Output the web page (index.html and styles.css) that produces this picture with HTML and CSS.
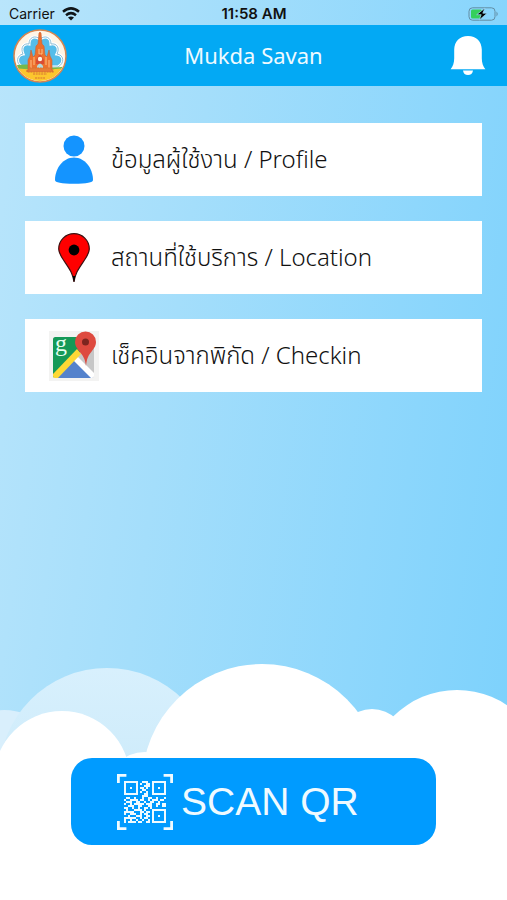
FILE: index.html
```html
<!DOCTYPE html>
<html lang="th">
<head>
<meta charset="utf-8">
<meta name="viewport" content="width=device-width, initial-scale=1">
<title>Mukda Savan</title>
<link rel="stylesheet" href="styles.css">
</head>
<body>
<div class="app">
  <div class="status">
    <div class="carrier">
      <span>Carrier</span>
      <svg width="18" height="14" viewBox="0 0 18 14" fill="none" stroke="#101518" stroke-width="2.5" aria-hidden="true">
        <path d="M1 4.8Q9-2 17 4.8M4 8.2q5-4.1 10 0"/>
        <path d="M9 13.5 6 10.6q3-2.2 6 0z" fill="#101518" stroke="none"/>
      </svg>
    </div>
    <time class="clock">11:58 AM</time>
    <svg class="battery" width="31" height="14" viewBox="0 0 31 14" aria-hidden="true">
      <rect x="1" y=".8" width="26" height="12.4" rx="3.5" fill="none" stroke="#628da3"/>
      <rect x="3" y="2.6" width="11" height="8.8" rx="1.5" fill="#35cf5b"/>
      <path d="M28.5 4.5q2.4 2.5 0 5z" fill="#628da3"/>
      <path d="M17 1 8.7 7.7h4.5L11.2 13l8-6.8h-4.4z" fill="#000" stroke="#a5dffb" stroke-width=".7"/>
    </svg>
  </div>

  <header class="bar">
    <svg class="emblem" width="54" height="54" viewBox="0 0 54 54" role="img" aria-label="Mukda Savan emblem">
      <defs><clipPath id="seal"><circle cx="27" cy="27" r="25"/></clipPath></defs>
      <circle cx="27" cy="27" r="26" fill="#fff5e5" stroke="#d78650" stroke-width="1.5"/>
      <g clip-path="url(#seal)">
        <path d="M9 38c-7-4-5-12 1-13-3-7 1-11 6-10 0-7 6-9 11-5 5-4 11-2 11 5 6-1 9 4 6 10 7 1 8 9 1 13z" fill="#56bde9" stroke="#fff" stroke-width="3"/>
        <path d="M9 38c-7-4-5-12 1-13-3-7 1-11 6-10 0-7 6-9 11-5 5-4 11-2 11 5 6-1 9 4 6 10 7 1 8 9 1 13z" fill="none" stroke="#74afc9" stroke-width=".8"/>
        <path d="M0 37q13-3 27 0t27 0v4H0z" fill="#75b94b"/>
        <path d="M0 39q27 3 54 0v15H0z" fill="#fcc62e"/>
        <path d="M15 42V31l2-4 1-6 2 7 2-2 1-9 2-2 1-11 1-1 1 1 1 11 2 2 1 9 2 2 2-7 1 6 2 4v11z" fill="#ed702c" stroke="#c96236" stroke-width=".6"/>
        <path d="M18 31v9M21 28v8M33 28v8M36 31v9M26 20v5h3v-5" fill="none" stroke="#ffc083" stroke-width="1"/>
        <path d="M23 35v-4l4-6 4 6v4z" fill="#d94c34"/>
        <circle cx="27" cy="30" r="2.2" fill="#fff4df"/>
        <path d="M24 42v-5q3-5 6 0v5z" fill="#b4d9da"/>
        <path d="M16 39h22v2h2v2H14v-2h2zM20 45h14M22 49h10" fill="#e77d35" stroke="#d67332" stroke-width="1.2" stroke-dasharray="2 .7"/>
      </g>
    </svg>
    <h1 class="title">Mukda Savan</h1>
    <button class="bell" type="button" aria-label="Notifications">
      <svg width="36" height="42" viewBox="0 0 36 42" fill="#fff" aria-hidden="true">
        <path d="M18 1C9.5 1 4.4 6.7 4.2 14.5v8.8c0 4.8-1.3 8-3.6 11h34.8c-2.3-3-3.6-6.2-3.6-11v-8.8C31.6 6.7 26.5 1 18 1z"/>
        <path d="M13 35.5h10c-.4 3-2.2 4.500-5 4.500s-4.600-1.500-5-4.500z"/>
      </svg>
    </button>
  </header>

  <main class="menu">
    <a class="item" href="#profile">
      <svg class="icon" width="50" height="50" viewBox="0 0 50 50" fill="#1494ff" aria-hidden="true">
        <circle cx="25" cy="11" r="10.5"/>
        <path d="M6 45C6 33.500 14 22.500 25 22.500S44 33.500 44 45q0 3.800-19 3.800T6 45z"/>
      </svg>
      <span>ข้อมูลผู้ใช้งาน / Profile</span>
    </a>
    <a class="item" href="#location">
      <svg class="icon" width="50" height="50" viewBox="0 0 50 50" aria-hidden="true">
        <path d="M25 49C24 40 19.500 34.500 14.500 27 11.500 22.500 9.700 19.700 9.700 16a15.300 15.300 0 0 1 30.600 0c0 3.700-1.800 6.500-4.800 11C30.500 34.500 26 40 25 49z" fill="#f00" stroke="#3c1010" stroke-width="1.200"/>
        <path d="m23.500 43 1.500 6 1.500-6z"/>
        <circle cx="25" cy="17" r="5.400"/>
      </svg>
      <span>สถานที่ใช้บริการ / Location</span>
    </a>
    <a class="item" href="#checkin">
      <svg class="icon" width="50" height="50" viewBox="0 0 50 50" aria-hidden="true">
        <defs><clipPath id="map"><rect x="4" y="6" width="41" height="41" rx="2.500"/></clipPath></defs>
        <path d="M0 0h50v50H0z" fill="#f3f3f2"/>
        <g clip-path="url(#map)">
          <path d="M4 6h41v41H4z" fill="#c7c7c7"/>
          <path d="M4 6h29v13L4 47z" fill="#159957"/>
          <path d="M7 48 25 28l20 20z" fill="#5482cc"/>
          <path d="m24 29 4-4 17 17v5h-3z" fill="#fff"/>
          <path d="m3 44 25-26 4 5L8 48H3z" fill="#fdd835"/>
        </g>
        <text x="6" y="20" class="mapletter">g</text>
        <path d="M37 35c-1-8-3-10-7-15-3-4-4-6-4-9a10.500 10.500 0 0 1 21 0c0 3-1 5-4 9-4 5-5 7-6 15z" fill="#de4a3f"/>
        <circle cx="36.500" cy="11" r="3.500" fill="#7d251f"/>
      </svg>
      <span>เช็คอินจากพิกัด / Checkin</span>
    </a>
  </main>

  <footer class="sky">
    <svg class="clouds" viewBox="0 0 507 240" preserveAspectRatio="xMidYMin slice" aria-hidden="true">
      <defs>
        <linearGradient id="haze" x1="0" y1="0" x2="0" y2="1">
          <stop offset="0" stop-color="#d8f0fd"/><stop offset=".5" stop-color="#cdebfa"/>
        </linearGradient>
      </defs>
      <circle cx="4" cy="110" r="60" fill="#d9effc"/>
      <circle cx="107" cy="116" r="108" fill="url(#haze)"/>
      <g fill="#fff">
        <circle cx="62" cy="119" r="68"/>
        <circle cx="145" cy="132" r="40"/>
        <circle cx="262" cy="124" r="120"/>
        <circle cx="372" cy="84" r="35"/>
        <circle cx="457" cy="120" r="90"/>
        <path d="M0 99h507v141H0z"/>
      </g>
    </svg>
    <button class="scan" type="button">
      <svg width="56" height="56" viewBox="0 0 28 28" fill="none" stroke="#effaff" aria-hidden="true">
        <path d="M.7 4.500V.7H4.700M23.300.7h4V4.500M.7 23.500v3.800H4.700M23.300 27.300h4V23.500" stroke-width="1.400"/>
        <path d="M4 4h6v6H4zM18 4h6v6h-6zM18 18h6v6h-6zM6.500 7h1M20.500 7h1M20.500 21h1M12.500 4h3M11.500 5h1m2 0h2M13.500 6h3M11.500 7h2m1 0h1M12.500 8h2M11.500 9h1m2 0h1M13.500 10h2M12.500 11h3M4.500 12h2m2 0h1m3 0h1m2 0h2m2 0h1m3 0h1M3.500 13h1m2 0h4m1 0h2m2 0h1m1 0h3m1 0h2M4.500 14h3m2 0h2m2 0h1m2 0h2m2 0h1M3.500 15h1m2 0h1m1 0h5m1 0h3m2 0h2m1 0h2M5.500 16h3m2 0h2m3 0h2m2 0h1m2 0h2M3.500 17h2m2 0h1m2 0h1m2 0h2m1 0h1M4.500 18h1m3 0h4m1 0h1M3.500 19h5m3 0h2m1 0h2M3.500 20h1m2 0h3m2 0h1m1 0h2M5.500 21h1m3 0h3m2 0h2M3.500 22h6m2 0h1m1 0h2M3.500 23h1m2 0h1m2 0h1m2 0h1m2 0h1M3.500 24h1m1 0h4m1 0h2m2 0h2"/>
      </svg>
      <span>SCAN QR</span>
    </button>
  </footer>
</div>
</body>
</html>
```
FILE: styles.css
```css
* {
  box-sizing: border-box;
}

body {
  margin: 0;
  font-family: "Noto Sans", "Noto Sans Thai", sans-serif;
  color: #111;
}

.app {
  display: flex;
  flex-direction: column;
  min-height: 100vh;
  background: linear-gradient(98deg, #b9e5fb 0%, #a4defb 35%, #8ed7fc 70%, #7bd1fc 100%);
}

.status {
  display: grid;
  grid-template-columns: 1fr auto 1fr;
  align-items: center;
  height: 25px;
  padding: 2px 8px 0 9px;
  font: 14px/16px Inter, sans-serif;
}

.carrier {
  display: flex;
  align-items: center;
  gap: 7px;
}

.clock {
  font-size: 15px;
  font-weight: 600;
}

.battery {
  justify-self: end;
}

.bar {
  display: grid;
  grid-template-columns: 1fr auto 1fr;
  align-items: center;
  height: 61px;
  padding: 0 13px;
  background: #03a9f4;
}

.title {
  margin: 0;
  padding-bottom: 2px;
  font-size: 22px;
  font-weight: 400;
  line-height: 30px;
  color: #effaff;
}

.bell {
  justify-self: end;
  display: flex;
  margin-right: 8px;
  padding: 0;
  border: 0;
  background: none;
}

.menu {
  display: flex;
  flex-direction: column;
  gap: 25px;
  padding: 37px 25px;
}

.item {
  display: flex;
  align-items: center;
  gap: 12px;
  height: 73px;
  padding: 0 24px;
  background: #fff;
  color: #111;
  font-size: 24px;
  font-weight: 350;
  line-height: 32px;
  text-decoration: none;
}

.item span {
  padding-bottom: 2px;
}

.icon {
  flex: none;
}

.mapletter {
  font: 24px "Liberation Serif", serif;
  fill: #e5fff1;
}

.sky {
  position: relative;
  margin-top: auto;
  padding: 98px 14% 55px;
}

.clouds {
  position: absolute;
  inset: 0;
  width: 100%;
  height: 100%;
}

.scan {
  position: relative;
  display: flex;
  align-items: center;
  gap: 8px;
  width: 100%;
  height: 87px;
  padding: 0 46px;
  border: 0;
  border-radius: 21px;
  background: #009bff;
  color: #effaff;
  font: 39px/48px "Liberation Sans", Arial, sans-serif;
}
```
